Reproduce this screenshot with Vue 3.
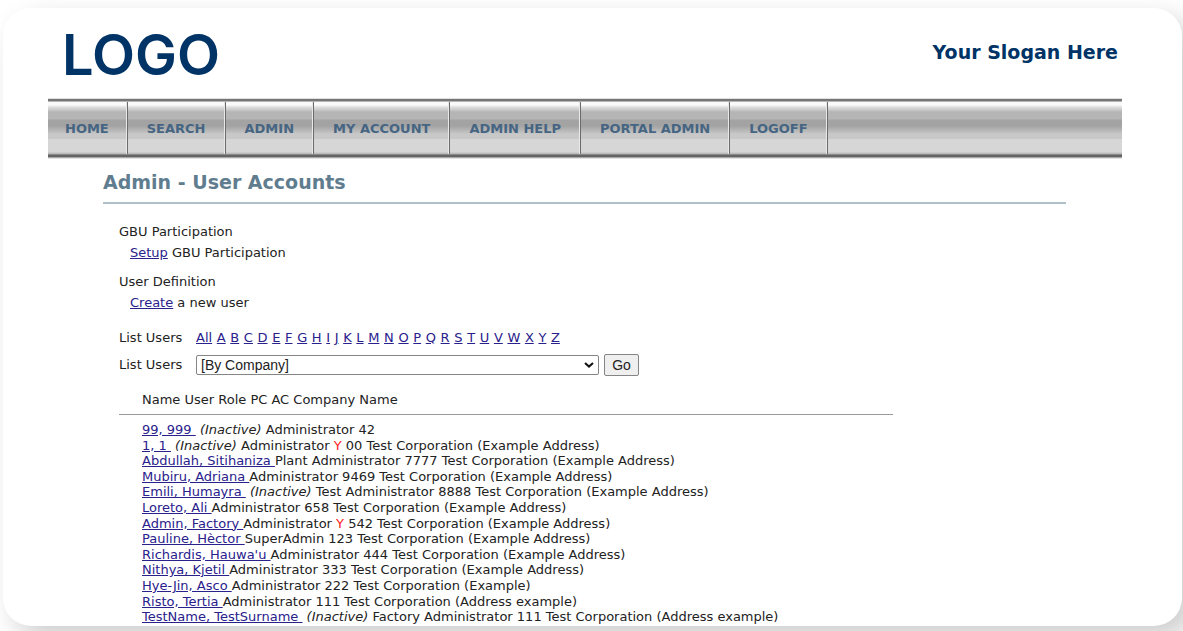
<script setup>
import { ref } from 'vue'

const menu = ['HOME', 'SEARCH', 'ADMIN', 'MY ACCOUNT', 'ADMIN HELP', 'PORTAL ADMIN', 'LOGOFF']
const letters = ['All', ...'ABCDEFGHIJKLMNOPQRSTUVWXYZ']
const company = ref('')

const users = [
  { name: '99, 999', inactive: true, role: 'Administrator', rest: '42' },
  { name: '1, 1', inactive: true, role: 'Administrator', flag: 'Y', rest: '00 Test Corporation (Example Address)' },
  { name: 'Abdullah, Sitihaniza', role: 'Plant Administrator', rest: '7777 Test Corporation (Example Address)' },
  { name: 'Mubiru, Adriana', role: 'Administrator', rest: '9469 Test Corporation (Example Address)' },
  { name: 'Emili, Humayra', inactive: true, role: 'Test Administrator', rest: '8888 Test Corporation (Example Address)' },
  { name: 'Loreto, Ali', role: 'Administrator', rest: '658 Test Corporation (Example Address)' },
  { name: 'Admin, Factory', role: 'Administrator', flag: 'Y', rest: '542 Test Corporation (Example Address)' },
  { name: 'Pauline, Hèctor', role: 'SuperAdmin', rest: '123 Test Corporation (Example Address)' },
  { name: "Richardis, Hauwa'u", role: 'Administrator', rest: '444 Test Corporation (Example Address)' },
  { name: 'Nithya, Kjetil', role: 'Administrator', rest: '333 Test Corporation (Example Address)' },
  { name: 'Hye-Jin, Asco', role: 'Administrator', rest: '222 Test Corporation (Example)' },
  { name: 'Risto, Tertia', role: 'Administrator', rest: '111 Test Corporation (Address example)' },
  { name: 'TestName, TestSurname', inactive: true, role: 'Factory Administrator', rest: '111 Test Corporation (Address example)' },
]
</script>

<template>
  <div class="card">
    <header class="header">
      <div class="logo">LOGO</div>
      <div class="slogan">Your Slogan Here</div>
    </header>

    <nav class="menu">
      <a v-for="item in menu" :key="item" href="#" class="menu-item">{{ item }}</a>
    </nav>

    <main class="content">
      <h1 class="title">Admin - User Accounts</h1>

      <div class="body">
        <section class="group">
          <h2 class="label">GBU Participation</h2>
          <p class="action"><a href="#">Setup</a> GBU Participation</p>
        </section>
        <section class="group">
          <h2 class="label">User Definition</h2>
          <p class="action"><a href="#">Create</a> a new user</p>
        </section>

        <div class="filter">
          <span class="filter-label">List Users</span>
          <div class="letters"><a v-for="l in letters" :key="l" href="#">{{ l }}</a></div>
        </div>
        <form class="filter company-filter" @submit.prevent>
          <label class="filter-label" for="company">List Users</label>
          <span class="select-wrap">
            <select id="company" v-model="company" class="select">
              <option value="">[By Company]</option>
            </select>
            <svg class="chevron" viewBox="0 0 10 6" aria-hidden="true">
              <path d="M1 1 L5 4.6 L9 1" fill="none" stroke="#111" stroke-width="2" />
            </svg>
          </span>
          <button class="go" type="submit">Go</button>
        </form>

        <div class="list-head">Name User Role PC AC Company Name</div>
        <ul class="users">
          <li v-for="u in users" :key="u.name">
            <a href="#">{{ u.name }}&nbsp;</a><template v-if="u.inactive">&nbsp;<i>(Inactive)</i>&nbsp;</template>{{ u.role }}<span v-if="u.flag" class="flag">&nbsp;{{ u.flag }}</span>&nbsp;{{ u.rest }}
          </li>
        </ul>
      </div>
    </main>
  </div>
</template>

<style>
body {
  background: #fff;
}
#app {
  display: flow-root;
  min-height: 100vh;
  overflow: hidden;
}
</style>

<style scoped>
.card {
  margin: 8px 1px 5px 3px;
  padding: 24px 60px 1px 45px;
  background: #fff;
  border-radius: 28px;
  box-shadow: 12px 12px 28px rgba(0, 0, 0, 0.2);
  font-family: "DejaVu Sans", sans-serif;
  font-size: 13px;
  line-height: 16px;
  color: #222;
}
a {
  color: #29218c;
}
.header {
  display: flex;
  justify-content: space-between;
  align-items: flex-start;
  height: 66px;
  padding: 0 4px 0 14px;
  color: #003366;
}
.logo {
  font: 600 56px/46px Inter, sans-serif;
}
.slogan {
  padding-top: 8px;
  font-size: 19px;
  line-height: 24px;
  font-weight: bold;
}
.menu {
  display: flex;
  height: 61px;
  box-sizing: border-box;
  padding: 4px 0 5px;
  background: linear-gradient(
    #dedede 0 1px, #777 1px 3px, #b5b5b5 3px 4px,
    #fafafa 4px 7px, #e0e0e0 9px, #c8c8c8 12px, #b5b5b5 14px 21px,
    #a3a3a3 22px 28px, #b5b5b5 32px, #c8c8c8 36px 41px,
    #d6d6d6 41px 54px, #b0b0b0 56px, #646464 57px 59px, #a8a8a8 59px 60px, #e4e4e4 60px
  );
}
.menu-item {
  padding: 0 19px;
  border-right: 1px solid #6c6c6c;
  box-shadow: inset -1px 0 #e8e8e8;
  color: #466583;
  font-weight: bold;
  line-height: 53px;
  text-decoration: none;
}
.menu-item:first-child {
  padding: 0 18px 0 17px;
}
.content {
  padding: 0 56px 0 55px;
}
.title {
  margin: 0;
  padding: 11px 0 8px;
  border-bottom: 2px solid #b0c0c8;
  color: #5f7d8f;
  font-size: 19px;
  line-height: 24px;
}
.body {
  padding: 20px 0 0 16px;
}
.group {
  margin-bottom: 13px;
}
.label {
  margin: 0 0 5px;
  font-size: 13px;
  font-weight: normal;
}
.action {
  margin: 0 0 0 11px;
}
.filter {
  display: flex;
  align-items: center;
  padding-top: 6px;
}
.filter-label {
  width: 77px;
}
.letters {
  display: flex;
  justify-content: space-between;
  width: 364px;
}
.company-filter {
  padding-top: 8px;
}
.select-wrap {
  position: relative;
  display: flex;
  width: 403px;
}
.select {
  appearance: none;
  width: 100%;
  height: 20px;
  padding: 0 4px;
  border: 1px solid #858585;
  border-radius: 2px;
  background: #fff;
  color: #222;
  font: 14px/18px "Liberation Sans", sans-serif;
}
.chevron {
  position: absolute;
  right: 5px;
  top: 7px;
  width: 10px;
  height: 6px;
}
.go {
  width: 35px;
  height: 22px;
  margin-left: 5px;
  padding: 0;
  border: 1px solid #858585;
  border-radius: 2px;
  background: #efefef;
  color: #222;
  font: 14px/18px "Liberation Sans", sans-serif;
}
.list-head {
  width: 751px;
  margin-top: 16px;
  padding: 0 0 6px 23px;
  border-bottom: 1px solid #999;
}
.users {
  margin: 0;
  padding: 7px 0 0 23px;
  list-style: none;
  line-height: 1.2;
}
.flag {
  color: #ff2020;
}
</style>
